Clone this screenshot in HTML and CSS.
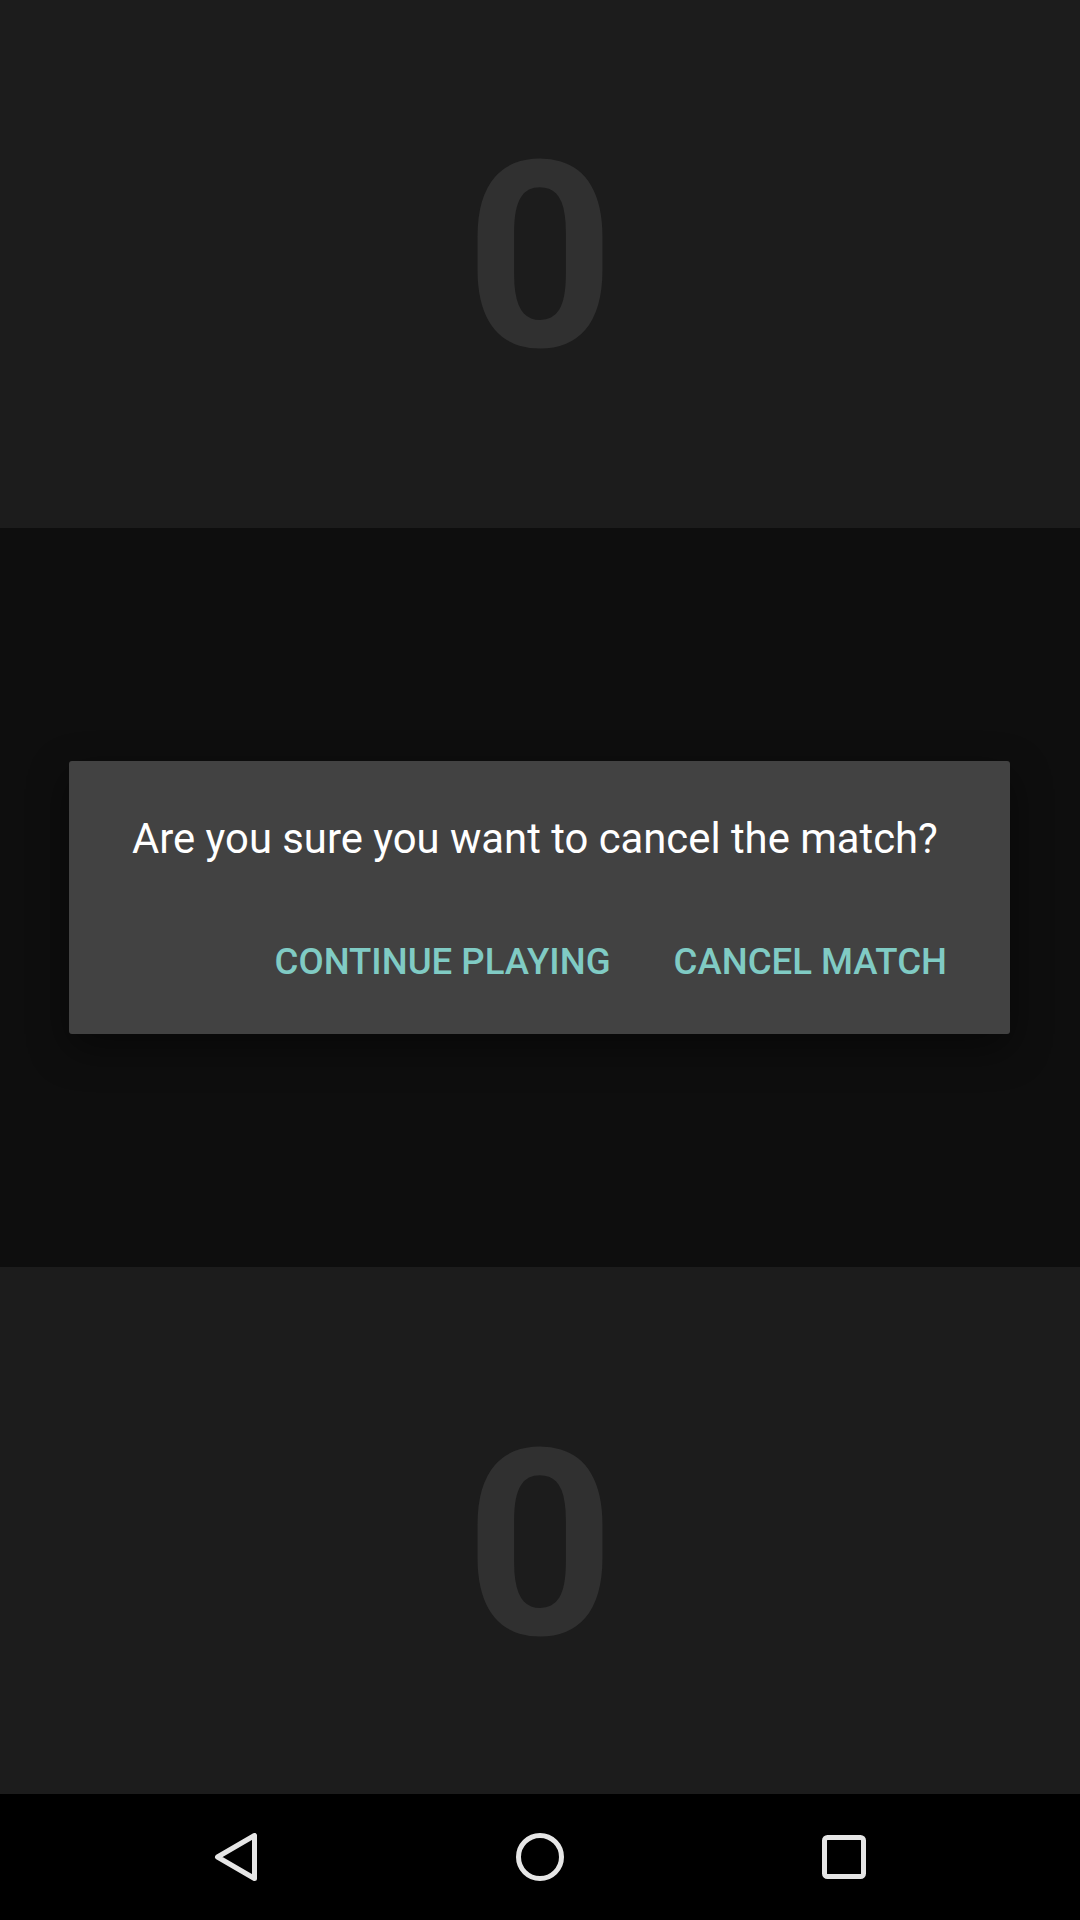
FILE: index.html
```html
<!DOCTYPE html>
<html>
<head>
<meta charset="utf-8">
<link rel="stylesheet" href="styles.css">
</head>
<body>
<div class="screen">
  <div class="panel panel-top"><span class="score">0</span></div>
  <div class="middle">
    <div class="dialog">
      <p class="message">Are you sure you want to cancel the match?</p>
      <div class="actions">
        <span class="btn">CONTINUE PLAYING</span>
        <span class="btn">CANCEL MATCH</span>
      </div>
    </div>
  </div>
  <div class="panel panel-bottom"><span class="score">0</span></div>
  <div class="navbar">
    <div class="slot">
      <svg width="48" height="48" viewBox="0 0 48 48"><polygon points="5.5,24 42.5,2.5 42.5,45.5" fill="none" stroke="#e6e6e6" stroke-width="5" stroke-linejoin="round"/></svg>
    </div>
    <div class="slot">
      <svg width="48" height="48" viewBox="0 0 48 48"><circle cx="24" cy="24" r="21.5" fill="none" stroke="#e6e6e6" stroke-width="5"/></svg>
    </div>
    <div class="slot">
      <svg width="48" height="48" viewBox="0 0 48 48"><rect x="4.5" y="4.5" width="39" height="39" rx="3" fill="none" stroke="#e6e6e6" stroke-width="5"/></svg>
    </div>
  </div>
</div>
</body>
</html>
```
FILE: styles.css
```css
html, body {
  margin: 0;
  padding: 0;
  background: #000;
}
.screen {
  width: 1080px;
  height: 1920px;
  display: flex;
  flex-direction: column;
  font-family: Roboto, "Liberation Sans", sans-serif;
}
.panel {
  background: #1c1c1c;
  display: flex;
  align-items: center;
  justify-content: center;
  box-sizing: border-box;
}
.panel-top {
  height: 528px;
  padding-bottom: 14px;
}
.panel-bottom {
  height: 527px;
  padding-top: 28px;
}
.score {
  font-size: 260px;
  line-height: 260px;
  font-weight: 700;
  color: #303030;
}
.middle {
  height: 739px;
  background: #0e0e0e;
  display: flex;
  align-items: center;
  padding: 0 70px 0 69px;
  box-sizing: border-box;
}
.dialog {
  flex: 1;
  background: #424242;
  border-radius: 3px;
  box-shadow: 0 14px 40px rgba(0, 0, 0, 0.45);
  padding: 53px 0 50px 63px;
  box-sizing: border-box;
  height: 273px;
}
.message {
  margin: 0;
  font-size: 41.8px;
  line-height: 50px;
  color: #ffffff;
}
.actions {
  display: flex;
  justify-content: flex-end;
  gap: 63px;
  padding-right: 63px;
  margin-top: 76px;
}
.btn {
  font-size: 36.6px;
  line-height: 44px;
  font-weight: 500;
  color: #80cbc4;
}
.navbar {
  height: 126px;
  background: #000;
  display: flex;
  justify-content: center;
  align-items: center;
}
.slot {
  width: 304px;
  display: flex;
  justify-content: center;
  align-items: center;
}
.slot svg {
  display: block;
}
```
